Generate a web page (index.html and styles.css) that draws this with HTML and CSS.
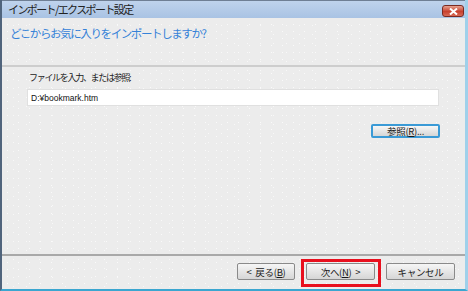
FILE: index.html
```html
<!DOCTYPE html>
<html lang="ja">
<head>
<meta charset="UTF-8">
<title>インポート/エクスポート設定</title>
<link rel="stylesheet" href="styles.css">
</head>
<body>
<div class="window">
    <div class="titlebar">
        <span class="title">インポート/エクスポート設定</span>
        <button class="close-btn" aria-label="閉じる">
            <svg width="9" height="7" viewBox="0 0 9 7"><path d="M1 0.5 L8 6.5 M8 0.5 L1 6.5" stroke="#fff" stroke-width="2"/></svg>
        </button>
    </div>
    <div class="body">
        <div class="header">
            <h1>どこからお気に入りをインポートしますか?</h1>
        </div>
        <div class="main">
            <label class="field-label" for="path">ファイルを入力、または参照:</label>
            <input class="path-input" id="path" type="text" value="D:¥bookmark.htm">
            <div class="browse-row">
                <button class="btn btn-default">参照(<u>R</u>)...</button>
            </div>
        </div>
        <div class="footer">
            <button class="btn back-btn">&lt; 戻る(<u>B</u>)</button>
            <span class="highlight"><button class="btn">次へ(<u>N</u>) &gt;</button></span>
            <button class="btn cancel-btn">キャンセル</button>
        </div>
    </div>
</div>
</body>
</html>
```

FILE: styles.css
```css
* {
    margin: 0;
    padding: 0;
    box-sizing: border-box;
}
body {
    background: #ffffff;
    font-family: "Noto Sans CJK JP", "Noto Sans", sans-serif;
    font-size: 11px;
    color: #1a1a1a;
}
.window {
    width: 468px;
    height: 291px;
    display: flex;
    flex-direction: column;
    border-left: 2px solid #50647c;
    border-right: 3px solid #9fd0ea;
    border-bottom: 2px solid #3ba6d0;
    background-color: #ececec;
    background-image:
        radial-gradient(circle, #fafafa 0.7px, transparent 1px),
        radial-gradient(circle, #f8f8f8 0.7px, transparent 1px);
    background-size: 11px 7px, 13px 9px;
    background-position: 0 0, 5px 3px;
}
.titlebar {
    height: 18px;
    display: flex;
    align-items: center;
    justify-content: space-between;
    padding: 0 1px 0 6px;
    background: linear-gradient(#bfd3ec, #a9c3e4);
    border-top: 1px solid #6f7f94;
}
.title {
    font-size: 11px;
    letter-spacing: -1.6px;
    color: #222;
    line-height: 1;
}
.close-btn {
    width: 22px;
    height: 12px;
    border: 1px solid #7a2a22;
    border-radius: 3px;
    background: linear-gradient(#e6a190, #c8412f 55%, #d86a55);
    display: flex;
    align-items: center;
    justify-content: center;
    margin-top: 3px;
}
.body {
    flex: 1;
    display: flex;
    flex-direction: column;
}
.header {
    height: 49px;
    padding: 7px 0 0 8px;
    border-bottom: 2px solid #cdcdcd;
}
.header h1 {
    font-size: 11.5px;
    letter-spacing: -1.4px;
    font-weight: normal;
    color: #3582d8;
    line-height: 16px;
}
.main {
    flex: 1;
    padding: 5px 25px 0 23px;
    display: flex;
    flex-direction: column;
    border-bottom: 2px solid #a9a9a9;
}
.field-label {
    font-size: 9px;
    letter-spacing: -1.3px;
    line-height: 12px;
    padding-left: 4px;
}
.path-input {
    margin-top: 5px;
    height: 17px;
    width: 412px;
    margin-left: 2px;
    border: 1px solid #e0e0e0;
    background: #fff;
    font-family: "Liberation Sans", sans-serif;
    font-size: 8.5px;
    padding: 0 3px;
    color: #111;
    outline: none;
}
.browse-row {
    display: flex;
    justify-content: flex-end;
    margin-top: 18px;
}
.btn {
    width: 69px;
    height: 17px;
    border: 1px solid #8a8a8a;
    border-radius: 2px;
    background: linear-gradient(#f6f6f6, #e6e6e6 50%, #d6d6d6);
    font-family: "Noto Sans CJK JP", sans-serif;
    font-size: 9.5px;
    letter-spacing: -0.3px;
    word-spacing: 2px;
    line-height: 14px;
    color: #1a1a1a;
}
.btn-default {
    height: 14px;
    line-height: 10px;
    border: 2px solid #3a9ad6;
}
.footer {
    height: 33px;
    display: flex;
    align-items: flex-start;
    justify-content: flex-end;
    padding: 3px 10px 0 0;
}
.back-btn {
    width: 58px;
    margin: 4px 6px 0 0;
}
.cancel-btn {
    margin: 4px 0 0 5px;
}
.highlight {
    display: flex;
    padding: 1px 3px 4px 2px;
    border: 3px solid #e8101e;
}
```
